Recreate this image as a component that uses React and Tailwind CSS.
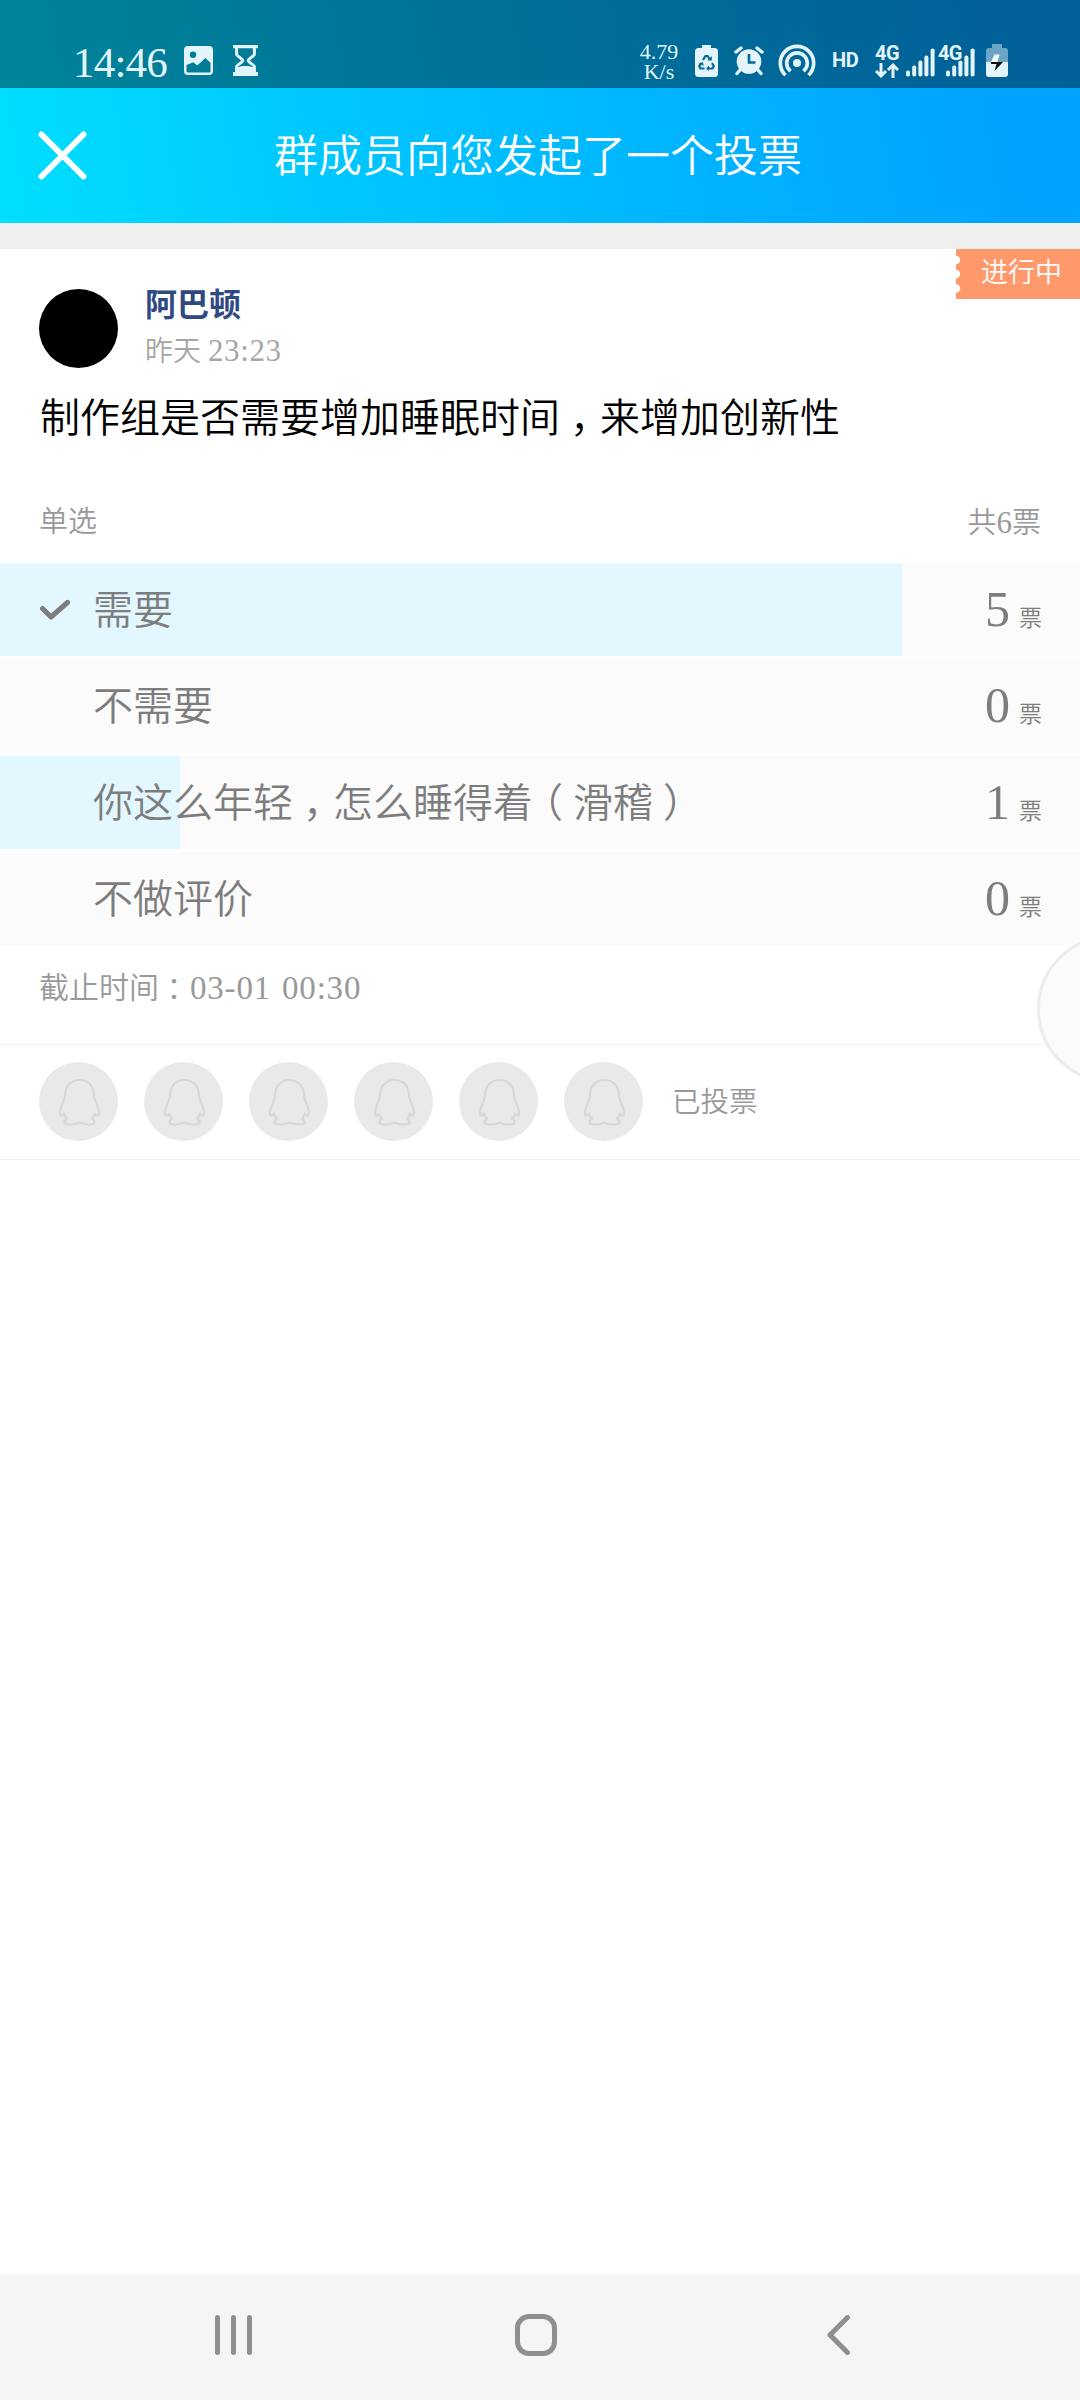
import React from "react";

const OPTIONS = [
  { text: "需要", votes: 5, width: 902, checked: true },
  { text: "不需要", votes: 0, width: 0 },
  { text: "你这么年轻，怎么睡得着（滑稽）", votes: 1, width: 180 },
  { text: "不做评价", votes: 0, width: 0 },
];

// Full-width punctuation is centred in its square cell.
function CenteredPunct({ text }) {
  return text.split(/([，：（）])/).map((part, i) =>
    i % 2 ? (
      <span key={i} className="px-[0.25em] [font-feature-settings:'halt']">{part}</span>
    ) : (
      part
    )
  );
}

function SignalBars() {
  return (
    <svg className="block" width="29" height="29" viewBox="0 0 29 29" fill="currentColor">
      <rect x="0" y="22.5" width="4" height="6" rx="1.8" />
      <rect x="6.2" y="17.5" width="4" height="11" rx="1.8" />
      <rect x="12.4" y="12.5" width="4" height="16" rx="1.8" />
      <rect x="18.4" y="7.5" width="4" height="21" rx="1.8" />
      <rect x="24.6" y="0.5" width="4" height="28" rx="1.8" />
    </svg>
  );
}

function StatusBar() {
  return (
    <div className="h-[88px] bg-black/40 pl-[73px] pt-[44px] flex items-start text-[#e2f5fc]">
      <div className="w-[111px] text-[43px] leading-[37px] tracking-[-0.8px] whitespace-nowrap">14:46</div>
      <svg className="mt-[2px] shrink-0" width="29" height="29" viewBox="0 0 29 29">
        <path
          fill="currentColor"
          fillRule="evenodd"
          d="M4 0h21a4 4 0 0 1 4 4v21a4 4 0 0 1-4 4H4a4 4 0 0 1-4-4V4a4 4 0 0 1 4-4ZM2.5 19v6.2a1.3 1.3 0 0 0 1.3 1.3h21.4a1.3 1.3 0 0 0 1.3-1.3v-8.5l-5.2-4.7-8 7.5-4-3.3ZM9 5.6a3.2 3.2 0 1 0 0 6.4 3.2 3.2 0 0 0 0-6.4Z"
        />
      </svg>
      <svg className="ml-[20px] mt-[1px] shrink-0" width="25" height="31" viewBox="0 0 25 31">
        <path fill="currentColor" d="M0 0h25v3.2H0zM0 27h25v4H0zM2 28l1-5 6-2h7l6 2 1 5z" />
        <path
          d="M3.6 2v7.5c0 1.2 6.2 4.2 6.2 6s-6.2 4.600-6.200 6V28M21.400 2v7.500c0 1.200-6.200 4.200-6.200 6s6.200 4.600 6.200 6V28"
          fill="none"
          stroke="currentColor"
          strokeWidth="3"
        />
      </svg>
      <div className="ml-[380px] w-[42px] shrink-0 text-center text-[22px] leading-[19.5px] mt-[-2px]">
        <div>4.79</div>
        <div>K/s</div>
      </div>
      <svg className="ml-[15px] mt-[1px] shrink-0" width="23" height="32" viewBox="0 0 23 32">
        <path fill="currentColor" d="M7 0h9v3h3.500a3.500 3.500 0 0 1 3.500 3.500v22a3.500 3.500 0 0 1-3.500 3.500h-16A3.500 3.500 0 0 1 0 28.500v-22A3.500 3.500 0 0 1 3.500 3H7z" />
        <g fill="none" stroke="#026a97" strokeWidth="2.200" strokeLinejoin="round">
          <path d="M8 15l2.200-3.800h2.600L15 15" />
          <path d="M17 18l1.800 3.200-1.300 2.300h-4" />
          <path d="M9.500 23.500h-4l-1.300-2.300L6.200 18" />
        </g>
        <path fill="#026a97" d="M12.500 15.500h4.300V11zM14 20.800v5.200l-3-2.600zM3.800 18.200l4.200-1 .6 3.800z" />
      </svg>
      <svg className="ml-[16px] mt-[2px] shrink-0" width="30" height="30" viewBox="0 0 30 30">
        <circle cx="15" cy="15.500" r="12.300" fill="currentColor" />
        <g stroke="currentColor" strokeWidth="3.400" strokeLinecap="round">
          <path d="M2 6l5-4M28 6l-5-4M6 24l-3 3.500M24 24l3 3.500" />
        </g>
        <path d="M15 8v8.500h6.500" fill="none" stroke="#026a97" strokeWidth="2.600" />
      </svg>
      <svg className="ml-[14px] shrink-0" width="38" height="33" viewBox="0 0 38 33" fill="none" stroke="currentColor">
        <circle cx="19" cy="19" r="4" fill="currentColor" stroke="none" />
        <path d="M12.600 27.200a10.300 10.300 0 1 1 12.800 0" strokeWidth="3.600" />
        <path d="M7.500 31.200a16.700 16.700 0 1 1 23 0" strokeWidth="3.600" />
      </svg>
      <div className="ml-[16px] mt-[6px] w-[28px] shrink-0 font-['Roboto'] font-bold text-[20px] leading-[20px] tracking-[-0.3px]">HD</div>
      <div className="ml-[15px] w-[25px] shrink-0 mt-[-1px]">
        <div className="font-['Roboto'] font-bold text-[20px] leading-[20px] tracking-[-0.5px]">4G</div>
        <svg className="block" width="24" height="15" viewBox="0 0 24 15" fill="none" stroke="currentColor" strokeWidth="3">
          <path d="M6 0v12M1 8l5 5 5-5M18 15V3M13 7l5-5 5 5" />
        </svg>
      </div>
      <div className="ml-[6px] mt-[4px] shrink-0"><SignalBars /></div>
      <div className="relative ml-[11px] mt-[4px] shrink-0">
        <SignalBars />
        <div className="absolute left-[-8px] top-[-5px] font-['Roboto'] font-bold text-[20px] leading-[20px] tracking-[-0.8px] [text-shadow:0_0_2px_#02669a,0_0_2px_#02669a,0_0_3px_#02669a]">4G</div>
      </div>
      <svg className="ml-[11px] shrink-0" width="22" height="33" viewBox="0 0 22 33">
        <path fill="#6ba5c6" d="M6 0h10v4h3a3 3 0 0 1 3 3v12H0V7a3 3 0 0 1 3-3h3z" />
        <path fill="currentColor" d="M0 18h22v12a3 3 0 0 1-3 3H3a3 3 0 0 1-3-3z" />
        <path fill="#f3fbff" d="M8.500 10.500h5L11.500 18H5z" />
        <path fill="#101010" d="M5 18h12L8.500 27l2-7H5z" />
      </svg>
    </div>
  );
}

function QQAvatar() {
  return (
    <div className="size-[79px] rounded-full bg-[#e8eae9] shrink-0">
      <svg width="79" height="79" viewBox="0 0 79 79" fill="none" stroke="#d6d8d7" strokeWidth="2.200" strokeLinejoin="round">
        <path d="M40.500 18C31.500 18 26 24.500 26 33.500c0 5-5 11-5 17.500 0 2 .8 3 1.800 2.600L25 51.500c.3 2 1.300 3.600 3 5-2.500 1.400-3 2.500-2.500 5 4.500 1.500 10.500 1 15-1 4.500 2 10.500 2.500 15 1 .5-2.500 0-3.600-2.500-5 1.700-1.400 2.700-3 3-5l2.200 2.100c1 .4 1.800-.6 1.800-2.600 0-6.500-5-12.500-5-17.500C55 24.500 49.500 18 40.500 18Z" />
      </svg>
    </div>
  );
}

function OptionRow({ option }) {
  return (
    <div className="relative h-[93.3px] bg-[#fbfbfb] text-[#7d7d7d]">
      <div className="absolute inset-y-0 left-0 bg-[#e2f7ff]" style={{ width: option.width }} />
      <div className="relative h-full flex items-center pl-[39px] pr-[38px]">
        <div className="w-[54px] shrink-0">
          {option.checked && (
            <svg width="32" height="22" viewBox="0 0 32 22" fill="none" stroke="#7d7d7d" strokeWidth="5" strokeLinecap="round" strokeLinejoin="round">
              <path d="M3.500 9.500l8.500 8.500L28.500 3.500" />
            </svg>
          )}
        </div>
        <div className="flex-1 text-[40px] leading-none whitespace-nowrap pt-[3px]">
          <CenteredPunct text={option.text} />
        </div>
        <div className="flex items-baseline leading-none pb-[1px]">
          <span className="text-[50px]">{option.votes}</span>
          <span className="ml-[9px] text-[23px]">票</span>
        </div>
      </div>
    </div>
  );
}

export default function App() {
  return (
    <div className="relative w-[1080px] h-[2400px] overflow-hidden bg-white flex flex-col font-[350] font-['Liberation_Serif','Noto_Sans_CJK_SC',serif]">
      <div className="h-[223px] shrink-0 bg-[linear-gradient(80deg,#00dfff_0%,#00c5ff_33%,#00b4ff_62%,#00a4ff_90%,#00a2ff_100%)]">
        <StatusBar />
        <header className="h-[135px] flex items-center">
          <svg className="ml-[38px]" width="49" height="49" viewBox="0 0 49 49" stroke="#fff" strokeWidth="6" strokeLinecap="round">
            <path d="M3.500 3.500l42 42M45.500 3.500l-42 42" />
          </svg>
          <h1 className="ml-[187px] text-[44px] leading-none text-white pt-[4px] font-[350]">群成员向您发起了一个投票</h1>
        </header>
      </div>
      <div className="h-[26px] shrink-0 bg-[#efefef]" />

      <main className="flex-1">
        <section className="flex h-[119px]">
          <div className="ml-[39px] mt-[40px] size-[79px] rounded-full bg-black" />
          <div className="ml-[27px] mt-[39px] flex-1">
            <div className="text-[32px] leading-[34px] font-bold text-[#2f4a82]">阿巴顿</div>
            <div className="mt-[12px] text-[28px] leading-[34px] text-[#a6a6a6] whitespace-nowrap">
              昨天 <span className="text-[31px] tracking-[0.600px]">23:23</span>
            </div>
          </div>
          <div className="h-[50px] w-[124px] bg-[#ff996c] flex items-center">
            <svg width="5" height="50" viewBox="0 0 5 50" fill="#fff">
              <circle cx="0" cy="11" r="4.200" />
              <circle cx="0" cy="25" r="4.200" />
              <circle cx="0" cy="39.500" r="4.200" />
            </svg>
            <span className="ml-[20px] pb-[2px] text-[27px] leading-none text-white">进行中</span>
          </div>
        </section>

        <h2 className="h-[100px] pl-[40px] pt-[2px] flex items-center text-[40px] leading-none text-black font-[350]">
          <span className="whitespace-nowrap">
            <CenteredPunct text="制作组是否需要增加睡眠时间，来增加创新性" />
          </span>
        </h2>
        <div className="h-[95px] px-[39px] pt-[13px] flex items-center justify-between text-[29px] leading-none text-[#999]">
          <span>单选</span>
          <span>共<span className="text-[31px]">6</span>票</span>
        </div>

        <div className="flex flex-col gap-[3px]">
          {OPTIONS.map((option) => (
            <OptionRow key={option.text} option={option} />
          ))}
        </div>

        <div className="h-[99px] pl-[39px] pb-[13px] flex items-center leading-none text-[#999]">
          <span className="text-[30px]"><CenteredPunct text="截止时间：" /></span>
          <span className="ml-px text-[33px] tracking-[0.800px] [word-spacing:2px]">03-01 00:30</span>
        </div>

        <div className="h-[116px] border-y border-[#f1f1f1] pl-[39px] pb-px flex items-center gap-[26px]">
          {[0, 1, 2, 3, 4, 5].map((i) => (
            <QQAvatar key={i} />
          ))}
          <span className="ml-[3px] text-[28.500px] leading-none text-[#999] pt-[4px]">已投票</span>
        </div>
      </main>

      <nav className="h-[126px] shrink-0 bg-[#f5f5f5] flex items-start pt-[40px] text-[#8f8f8f]">
        <div className="ml-[215px] mt-px flex gap-[11px]">
          <div className="w-[5px] h-[40px] rounded-full bg-current" />
          <div className="w-[5px] h-[40px] rounded-full bg-current" />
          <div className="w-[5px] h-[40px] rounded-full bg-current" />
        </div>
        <div className="ml-[263px] size-[42px] rounded-[14px] border-5 border-current" />
        <svg className="ml-[269px] mt-px" width="25" height="40" viewBox="0 0 25 40" fill="none" stroke="currentColor" strokeWidth="5" strokeLinecap="round" strokeLinejoin="round">
          <path d="M21.500 2.500L4 20l17.500 17.500" />
        </svg>
      </nav>

      {/* Floating assist bubble docked to the right edge */}
      <div className="absolute left-[1037px] top-[935px] size-[148px] rounded-full border-[3px] border-[#ececec] bg-[#fbfbfb]/90" />
    </div>
  );
}
